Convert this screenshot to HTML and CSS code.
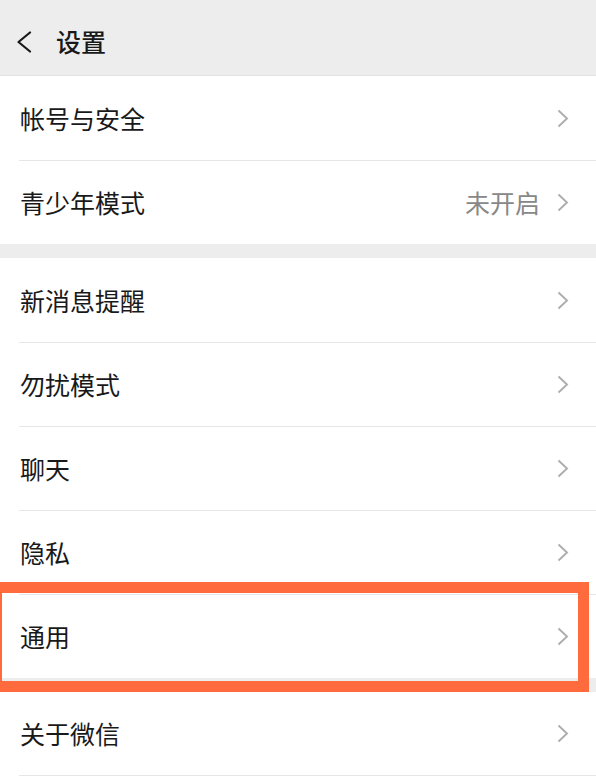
FILE: index.html
```html
<!DOCTYPE html>
<html lang="zh-CN">
<head>
    <meta charset="UTF-8">
    <meta name="viewport" content="width=device-width, initial-scale=1.0">
    <title>设置</title>
    <link rel="stylesheet" href="styles.css">
</head>
<body>
    <div class="page">
        <div class="header">
            <svg class="back" width="16" height="22" viewBox="0 0 16 22">
                <polyline points="14,1.5 2.5,11 14,20.5" fill="none" stroke="#191919" stroke-width="2.2" stroke-linecap="round" stroke-linejoin="round"/>
            </svg>
            <h1 class="title">设置</h1>
        </div>

        <div class="group">
            <div class="row">
                <span class="label">帐号与安全</span>
                <svg class="arrow" width="12" height="19" viewBox="0 0 12 19"><polyline points="1.5,1.5 10,9.5 1.5,17.5" fill="none" stroke="#adadad" stroke-width="1.9"/></svg>
            </div>
            <div class="row">
                <span class="label">青少年模式</span>
                <span class="value">未开启</span>
                <svg class="arrow" width="12" height="19" viewBox="0 0 12 19"><polyline points="1.5,1.5 10,9.5 1.5,17.5" fill="none" stroke="#adadad" stroke-width="1.9"/></svg>
            </div>
        </div>

        <div class="group">
            <div class="row">
                <span class="label">新消息提醒</span>
                <svg class="arrow" width="12" height="19" viewBox="0 0 12 19"><polyline points="1.5,1.5 10,9.5 1.5,17.5" fill="none" stroke="#adadad" stroke-width="1.9"/></svg>
            </div>
            <div class="row">
                <span class="label">勿扰模式</span>
                <svg class="arrow" width="12" height="19" viewBox="0 0 12 19"><polyline points="1.5,1.5 10,9.5 1.5,17.5" fill="none" stroke="#adadad" stroke-width="1.9"/></svg>
            </div>
            <div class="row">
                <span class="label">聊天</span>
                <svg class="arrow" width="12" height="19" viewBox="0 0 12 19"><polyline points="1.5,1.5 10,9.5 1.5,17.5" fill="none" stroke="#adadad" stroke-width="1.9"/></svg>
            </div>
            <div class="row">
                <span class="label">隐私</span>
                <svg class="arrow" width="12" height="19" viewBox="0 0 12 19"><polyline points="1.5,1.5 10,9.5 1.5,17.5" fill="none" stroke="#adadad" stroke-width="1.9"/></svg>
            </div>
            <div class="row">
                <span class="label">通用</span>
                <svg class="arrow" width="12" height="19" viewBox="0 0 12 19"><polyline points="1.5,1.5 10,9.5 1.5,17.5" fill="none" stroke="#adadad" stroke-width="1.9"/></svg>
            </div>
        </div>

        <div class="group">
            <div class="row row-line">
                <span class="label">关于微信</span>
                <svg class="arrow" width="12" height="19" viewBox="0 0 12 19"><polyline points="1.5,1.5 10,9.5 1.5,17.5" fill="none" stroke="#adadad" stroke-width="1.9"/></svg>
            </div>
        </div>

        <div class="mark"></div>
    </div>
</body>
</html>
```

FILE: styles.css
```css
*,
*::before,
*::after{
    box-sizing: border-box;
    margin: 0;
    padding: 0;
}
body{
    background: #fff;
    font-family: "Noto Sans CJK SC", "Noto Sans", sans-serif;
    color: #191919;
}
.page{
    position: relative;
    width: 596px;
    min-height: 782px;
    background: #fff;
}
.header{
    height: 76px;
    background: #ededed;
    border-bottom: 1px solid #e2e2e2;
    display: flex;
    align-items: center;
    padding-left: 16px;
    padding-top: 8px;
    gap: 24px;
}
.back{
    display: block;
}
.title{
    font-size: 25px;
    font-weight: 500;
    line-height: 1;
}
.group{
    background: #fff;
}
.group + .group{
    border-top: 14px solid #ededed;
}
.row{
    position: relative;
    height: 84px;
    display: flex;
    align-items: center;
    padding: 0 27px 0 20px;
}
.row + .row{
    border-top: 1px solid #e6e6e6;
    border-image: linear-gradient(to right, transparent 20px, #e6e6e6 20px) 1;
}
.row-line{
    border-bottom: 1px solid #e6e6e6;
    border-image: linear-gradient(to right, transparent 20px, #e6e6e6 20px) 1;
}
.label{
    flex: 1;
    font-size: 25px;
    line-height: 1;
}
.value{
    font-size: 25px;
    line-height: 1;
    color: #888;
    margin-right: 17px;
}
.arrow{
    display: block;
}
.mark{
    position: absolute;
    left: -9px;
    top: 582px;
    width: 598px;
    height: 110px;
    border: 11px solid #ff6b3d;
}
```
